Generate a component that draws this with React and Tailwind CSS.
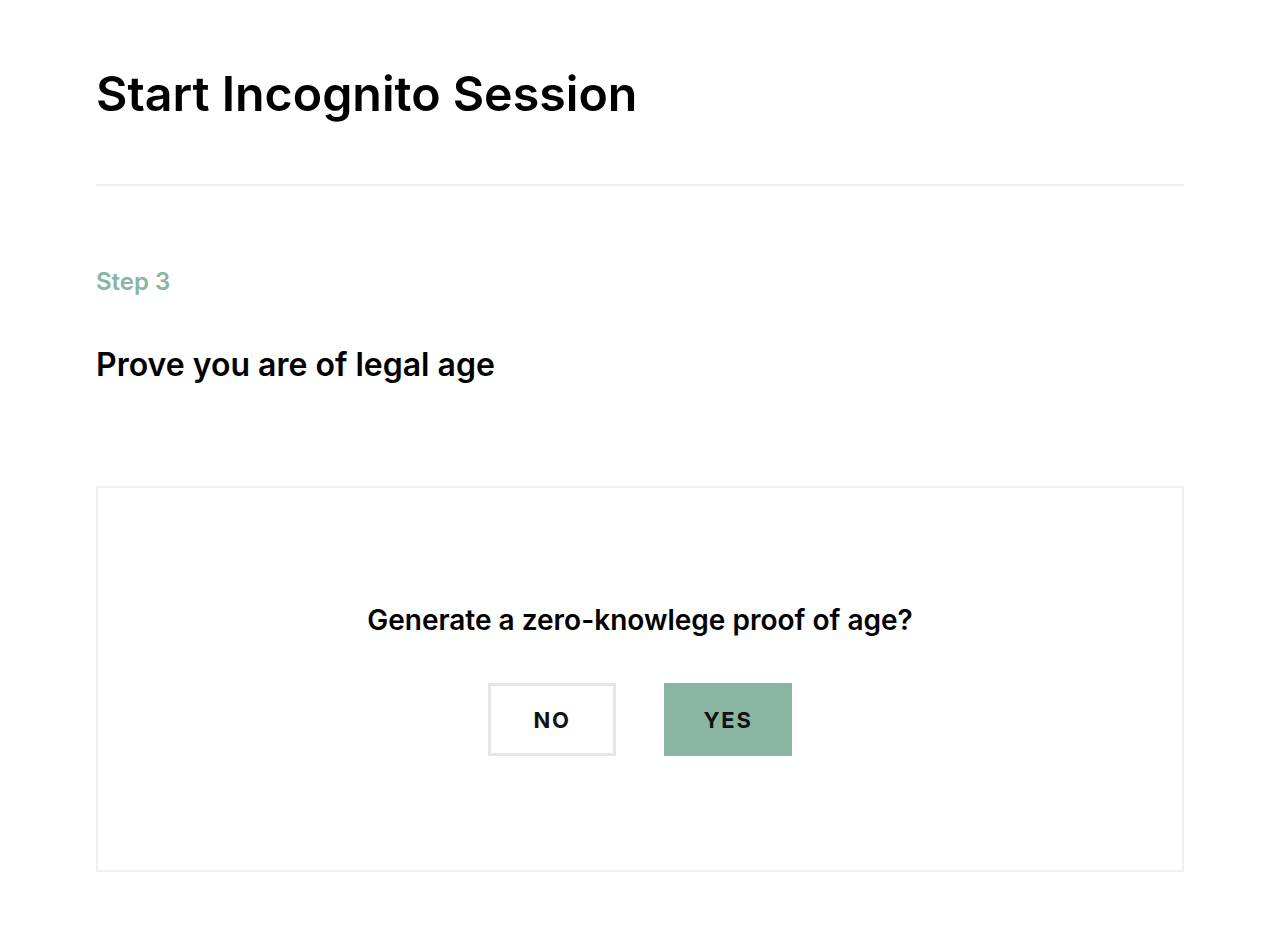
export default function App() {
  return (
    <div className="min-h-screen bg-white px-24 text-black" style={{ fontFamily: 'Inter, "Noto Sans", sans-serif' }}>
      <div className="pt-[62px] pb-[58px] border-b-2 border-[#efefef]">
        <h1 className="text-[48.3px] leading-[64px] font-semibold">Start Incognito Session</h1>
      </div>

      <p className="mt-20 text-[24px] leading-8 font-semibold text-[#8ab5a3]">Step 3</p>
      <h2 className="mt-[47px] text-[32px] leading-10 font-semibold">Prove you are of legal age</h2>

      <div className="mt-[101px] h-[386px] border-2 border-[#f0f0f0] flex flex-col items-center justify-center">
        <p className="text-[28px] leading-9 font-semibold">Generate a zero-knowlege proof of age?</p>
        <div className="mt-[45px] flex gap-12">
          <button className="w-32 h-[73px] pt-0.5 border-[3px] border-[#e6e6e6] bg-white text-[22px] font-bold tracking-[0.08em] text-[#111]">
            NO
          </button>
          <button className="w-32 h-[73px] pt-0.5 bg-[#8ab5a3] text-[22px] font-bold tracking-[0.08em] text-[#111]">
            YES
          </button>
        </div>
      </div>
    </div>
  );
}
